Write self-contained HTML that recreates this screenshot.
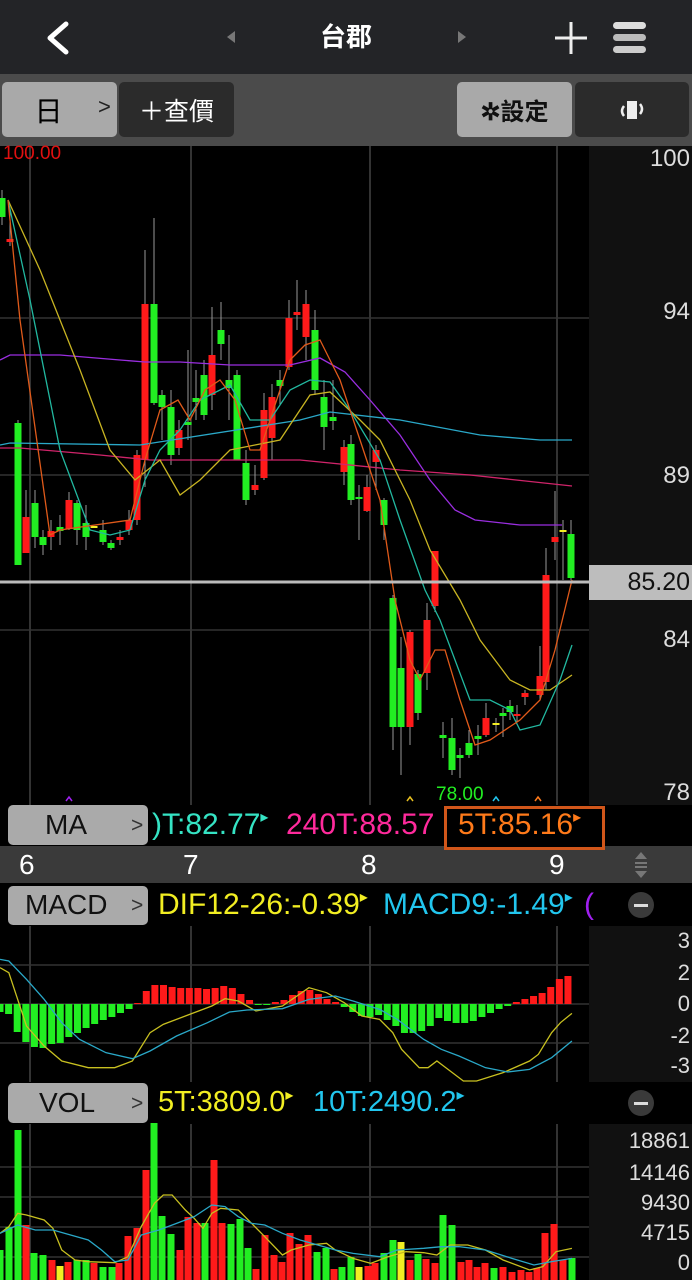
<!DOCTYPE html>
<html><head><meta charset="utf-8">
<style>
*{margin:0;padding:0;box-sizing:border-box}
body{width:692px;height:1280px;background:#000;overflow:hidden;position:relative;font-family:"Liberation Sans","Noto Sans CJK TC",sans-serif}
.abs{position:absolute}
.btn{position:absolute;border-radius:5px;display:flex;align-items:center;justify-content:center}
.lbl{position:absolute;white-space:nowrap;font-size:25px;line-height:1}
.v{font-size:30px;top:0}
</style></head><body>
<!-- top bar -->
<div class="abs" style="left:0;top:0;width:692px;height:74px;background:#232427"></div>
<svg class="abs" style="left:0;top:0" width="692" height="74">
<path d="M66 24 L50 38 L66 52" stroke="#fff" stroke-width="5" fill="none" stroke-linecap="round" stroke-linejoin="round"/>
<path d="M235 31 L227 37 L235 43Z" fill="#777"/>
<path d="M458 31 L466 37 L458 43Z" fill="#777"/>
<path d="M571 22 V54 M555 38 H587" stroke="#eee" stroke-width="3"/>
<rect x="613" y="22" width="33" height="7" rx="3.5" fill="#ddd"/>
<rect x="613" y="34" width="33" height="7" rx="3.5" fill="#bbb"/>
<rect x="613" y="46" width="33" height="7" rx="3.5" fill="#ccc"/>
</svg>
<div class="lbl" style="left:0;width:692px;text-align:center;top:24px;color:#fff;font-size:26px;font-weight:bold">台郡</div>
<!-- toolbar -->
<div class="abs" style="left:0;top:74px;width:692px;height:72px;background:#4b4b4b"></div>
<div class="btn" style="left:2px;top:82px;width:115px;height:55px;background:#a9a9a9"><span style="font-size:28px;color:#000;margin-right:22px">日</span></div>
<div class="lbl" style="left:98px;top:96px;color:#222;font-size:22px">&gt;</div>
<div class="btn" style="left:119px;top:82px;width:115px;height:55px;background:#2b2b2b;color:#fff;font-size:25px">＋查價</div>
<div class="btn" style="left:457px;top:82px;width:115px;height:55px;background:#a9a9a9;color:#111;font-size:24px;font-weight:bold">✲設定</div>
<div class="btn" style="left:575px;top:82px;width:114px;height:55px;background:#2b2b2b">
<svg width="30" height="24"><rect x="10" y="3" width="10" height="18" fill="#eee"/><path d="M7 8 Q3 13 7 18 M23 6 Q27 11 23 16" stroke="#eee" stroke-width="2.5" fill="none"/></svg></div>
<!-- right axis backgrounds -->
<div class="abs" style="left:589px;top:146px;width:103px;height:659px;background:#111"></div>
<div class="abs" style="left:589px;top:926px;width:103px;height:156px;background:#111"></div>
<div class="abs" style="left:589px;top:1124px;width:103px;height:156px;background:#111"></div>
<!-- date row -->
<div class="abs" style="left:0;top:846px;width:692px;height:37px;background:#3a3a3a"></div>
<svg id="chart" class="abs" style="left:0;top:0" width="692" height="1280"></svg>
<!-- price axis -->
<div class="lbl" style="right:2px;top:147px;color:#ddd;font-size:24px">100</div>
<div class="lbl" style="right:2px;top:300px;color:#ddd;font-size:24px">94</div>
<div class="lbl" style="right:2px;top:464px;color:#ddd;font-size:24px">89</div>
<div class="lbl" style="right:2px;top:628px;color:#ddd;font-size:24px">84</div>
<div class="lbl" style="right:2px;top:781px;color:#ddd;font-size:24px">78</div>
<div class="abs" style="left:589px;top:565px;width:103px;height:35px;background:#bdbdbd"></div>
<div class="lbl" style="right:2px;top:570px;color:#111;font-size:25px">85.20</div>
<div class="lbl" style="left:3px;top:144px;color:#e01010;font-size:19px">100.00</div>
<div class="lbl" style="left:436px;top:785px;color:#22ee22;font-size:19px">78.00</div>
<!-- MA row -->
<div class="btn" style="left:8px;top:805px;width:140px;height:40px;background:#aaa"></div>
<div class="lbl" style="left:45px;top:811px;color:#111;font-size:28px">MA</div>
<div class="lbl" style="left:131px;top:815px;color:#333;font-size:21px">&gt;</div>
<div class="lbl" style="left:152px;top:810px;color:#35e3c4;font-size:30px">)T:82.77<span style="font-size:16px;vertical-align:top">▸</span></div>
<div class="lbl" style="left:286px;top:810px;color:#ff2a9c;font-size:30px">240T:88.57</div>
<div class="abs" style="left:444px;top:806px;width:161px;height:44px;border:3px solid #d0561a;background:#000"></div>
<div class="lbl" style="left:458px;top:810px;color:#ff7a1a;font-size:30px">5T:85.16<span style="font-size:16px;vertical-align:top">▸</span></div>
<!-- dates -->
<div class="lbl" style="left:19px;top:851px;color:#fff;font-size:28px">6</div>
<div class="lbl" style="left:183px;top:851px;color:#fff;font-size:28px">7</div>
<div class="lbl" style="left:361px;top:851px;color:#fff;font-size:28px">8</div>
<div class="lbl" style="left:549px;top:851px;color:#fff;font-size:28px">9</div>
<svg class="abs" style="left:630px;top:850px" width="22" height="30"><path d="M5 9 L11 2 L17 9Z M5 21 L11 28 L17 21Z" fill="#777"/><rect x="5" y="12" width="12" height="2" fill="#777"/><rect x="5" y="16" width="12" height="2" fill="#777"/></svg>
<!-- MACD row -->
<div class="btn" style="left:8px;top:886px;width:140px;height:39px;background:#aaa"></div>
<div class="lbl" style="left:25px;top:891px;color:#111;font-size:28px">MACD</div>
<div class="lbl" style="left:131px;top:895px;color:#333;font-size:21px">&gt;</div>
<div class="lbl" style="left:158px;top:890px;color:#f2ee22;font-size:30px">DIF12-26:-0.39<span style="font-size:16px;vertical-align:top">▸</span></div>
<div class="lbl" style="left:383px;top:890px;color:#22c6ee;font-size:30px">MACD9:-1.49<span style="font-size:16px;vertical-align:top">▸</span></div>
<div class="lbl" style="left:584px;top:890px;color:#a020f0;font-size:30px">(</div>
<div class="abs" style="left:628px;top:892px;width:26px;height:26px;border-radius:13px;background:#3a3a3a"></div>
<div class="abs" style="left:634px;top:904px;width:14px;height:3px;background:#ddd"></div>
<!-- MACD axis -->
<div class="lbl" style="right:2px;top:930px;color:#ddd;font-size:22px">3</div>
<div class="lbl" style="right:2px;top:962px;color:#ddd;font-size:22px">2</div>
<div class="lbl" style="right:2px;top:993px;color:#ddd;font-size:22px">0</div>
<div class="lbl" style="right:2px;top:1025px;color:#ddd;font-size:22px">-2</div>
<div class="lbl" style="right:2px;top:1055px;color:#ddd;font-size:22px">-3</div>
<!-- VOL row -->
<div class="btn" style="left:8px;top:1083px;width:140px;height:40px;background:#aaa"></div>
<div class="lbl" style="left:39px;top:1089px;color:#111;font-size:28px">VOL</div>
<div class="lbl" style="left:131px;top:1093px;color:#333;font-size:21px">&gt;</div>
<div class="lbl" style="left:158px;top:1088px;color:#f2ee22;font-size:29px">5T:3809.0<span style="font-size:16px;vertical-align:top">▸</span></div>
<div class="lbl" style="left:313px;top:1088px;color:#22c6ee;font-size:29px">10T:2490.2<span style="font-size:16px;vertical-align:top">▸</span></div>
<div class="abs" style="left:628px;top:1090px;width:26px;height:26px;border-radius:13px;background:#3a3a3a"></div>
<div class="abs" style="left:634px;top:1102px;width:14px;height:3px;background:#ddd"></div>
<div class="lbl" style="right:2px;top:1130px;color:#ddd;font-size:22px">18861</div>
<div class="lbl" style="right:2px;top:1162px;color:#ddd;font-size:22px">14146</div>
<div class="lbl" style="right:2px;top:1192px;color:#ddd;font-size:22px">9430</div>
<div class="lbl" style="right:2px;top:1222px;color:#ddd;font-size:22px">4715</div>
<div class="lbl" style="right:2px;top:1252px;color:#ddd;font-size:22px">0</div>
<script>
var s='';
var G='#22ee22',R='#ff1a1a',Y='#f2ee22';
[30,191,370,557].forEach(function(x){
 s+='<line x1="'+x+'" y1="146" x2="'+x+'" y2="805" stroke="#444" stroke-width="1.5"/>';
 s+='<line x1="'+x+'" y1="926" x2="'+x+'" y2="1082" stroke="#444" stroke-width="1.5"/>';
 s+='<line x1="'+x+'" y1="1124" x2="'+x+'" y2="1280" stroke="#444" stroke-width="1.5"/>';
});
[318,475,630].forEach(function(y){s+='<line x1="0" y1="'+y+'" x2="589" y2="'+y+'" stroke="#333" stroke-width="1.5"/>';});
[965,1004,1043].forEach(function(y){s+='<line x1="0" y1="'+y+'" x2="589" y2="'+y+'" stroke="#333" stroke-width="1.5"/>';});
[1167,1197,1227,1257].forEach(function(y){s+='<line x1="0" y1="'+y+'" x2="589" y2="'+y+'" stroke="#333" stroke-width="1.5"/>';});
var c=[[2,198,217,190,225,G],[10,239,242,210,246,R],[18,423,565,420,565,G],[26,517,553,490,548,R],[35,503,537,490,548,G],[43,537,545,530,555,G],[51,531,537,520,550,R],[60,527,531,515,545,G],[69,500,529,492,530,R],[77,503,530,500,545,G],[86,523,537,505,550,G],[94,526,528,526,528,Y],[103,530,542,520,545,G],[111,543,548,540,550,G],[120,537,540,530,545,R],[129,520,530,510,535,R],[137,455,520,450,525,R],[145,304,460,250,487,R],[154,304,403,218,405,G],[162,395,407,390,440,G],[171,407,455,390,465,G],[179,430,448,420,455,R],[188,422,425,350,440,G],[196,398,402,370,420,G],[204,375,415,360,420,G],[212,355,395,307,410,R],[221,330,344,302,360,G],[229,380,388,335,420,G],[237,375,460,370,460,G],[246,463,500,450,505,G],[255,485,490,465,495,R],[264,410,478,393,480,R],[272,397,438,384,460,R],[280,380,386,370,405,G],[289,318,367,300,370,R],[297,312,315,280,330,R],[306,304,337,290,360,R],[315,330,390,310,395,G],[324,397,427,380,450,G],[333,417,421,380,430,G],[344,447,472,440,485,R],[351,444,500,435,505,G],[359,497,499,485,540,G],[367,487,511,475,512,R],[376,450,462,445,490,R],[384,500,525,498,540,G],[393,598,727,595,750,G],[401,668,727,637,775,G],[410,632,727,630,745,R],[418,674,713,670,720,G],[427,620,673,603,690,R],[435,551,606,551,612,R],[443,735,738,722,758,G],[452,738,770,718,775,G],[460,755,758,748,778,G],[469,743,755,730,758,G],[478,736,739,725,755,G],[486,718,735,703,737,R],[496,723,725,718,732,Y],[503,713,716,708,737,G],[510,706,712,700,720,G],[517,714,716,705,722,R],[525,693,697,690,705,R],[540,676,695,646,700,R],[546,575,682,548,690,R],[555,537,542,491,560,R],[563,530,532,520,580,Y],[571,534,578,520,580,G]];
c.forEach(function(d){
 s+='<line x1="'+d[0]+'" y1="'+d[3]+'" x2="'+d[0]+'" y2="'+d[4]+'" stroke="#999" stroke-width="1"/>';
 var h=Math.max(d[2]-d[1],2);
 s+='<rect x="'+(d[0]-3.5)+'" y="'+d[1]+'" width="7" height="'+h+'" fill="'+d[5]+'"/>';
});
function pl(pts,col,w){s+='<polyline points="'+pts.map(function(p){return p[0]+','+p[1]}).join(' ')+'" fill="none" stroke="'+col+'" stroke-width="'+(w||1.3)+'"/>';}
pl([[0,360],[10,355],[60,355],[120,360],[145,362],[180,362],[230,365],[290,365],[320,358],[345,372],[370,400],[400,435],[430,480],[455,510],[475,520],[520,525],[562,525]],'#9a2ee0');
pl([[0,445],[10,443],[140,445],[300,420],[330,412],[400,420],[480,435],[540,440],[572,440]],'#2aa8c8');
pl([[0,448],[20,448],[100,455],[150,460],[300,460],[400,470],[470,475],[572,486]],'#d0246a');
pl([[8,200],[40,270],[80,370],[110,450],[135,480],[160,460],[180,495],[200,480],[230,450],[255,445],[280,440],[310,395],[330,392],[360,420],[380,440],[410,500],[430,550],[460,600],[480,640],[510,680],[530,690],[550,690],[572,675]],'#c8b422');
pl([[8,200],[30,300],[60,450],[90,530],[110,535],[130,530],[145,480],[160,450],[180,430],[200,400],[230,385],[250,420],[270,420],[290,390],[310,380],[330,382],[350,410],[380,460],[400,520],[425,590],[440,620],[470,700],[490,700],[510,710],[520,730],[540,725],[560,680],[572,645]],'#22b8a0');
pl([[8,200],[20,320],[50,535],[60,530],[130,520],[145,460],[160,410],[178,400],[190,420],[205,390],[220,380],[235,400],[250,450],[260,450],[270,420],[290,360],[305,345],[320,340],[340,380],[360,440],[380,500],[395,600],[410,660],[420,680],[435,650],[445,650],[460,700],[475,745],[490,740],[520,720],[540,700],[555,650],[572,580]],'#e05a1a');
s+='<line x1="0" y1="582" x2="589" y2="582" stroke="#bbb" stroke-width="3"/>';
[[69,'#a020f0'],[410,'#e8c020'],[496,'#22c6ee'],[538,'#ff7a1a']].forEach(function(m){s+='<path d="M'+(m[0]-3)+' 801 L'+m[0]+' 797 L'+(m[0]+3)+' 801" stroke="'+m[1]+'" fill="none" stroke-width="1.5"/>';});
var mh=[-8,-10,-28,-38,-43,-44,-40,-39,-33,-29,-24,-20,-16,-13,-9,-5,1,13,19,19,17,16,16,16,15,16,18,16,10,4,-1,-1,2,4,9,13,14,10,5,2,-3,-8,-12,-13,-11,-16,-22,-29,-29,-27,-22,-14,-17,-19,-19,-17,-13,-9,-5,-2,2,5,8,11,17,25,28];
mh.forEach(function(v,i){var x=i*19.5/2.266;var col=v>=0?R:G;var y=v>=0?1004-v:1004;s+='<rect x="'+(x-3.5)+'" y="'+y+'" width="7" height="'+Math.max(Math.abs(v),1)+'" fill="'+col+'"/>';});
function zp(pts,oy,col){pl(pts.map(function(p){return [p[0]/2.266,oy+p[1]/3]}),col,1.3);}
zp([[0,125],[20,140],[40,220],[60,300],[100,360],[140,405],[200,425],[260,425],[300,405],[340,320],[370,295],[420,270],[480,240],[510,218],[540,225],[580,255],[640,240],[700,185],[740,200],[780,230],[820,270],[860,280],[890,320],[910,370],[950,425],[970,425],[990,405],[1010,425],[1050,465],[1080,465],[1140,440],[1200,405],[1220,385],[1250,320],[1270,290],[1296,262]],926,'#c8c020');
zp([[0,100],[20,105],[60,160],[100,220],[140,290],[180,340],[240,380],[300,398],[340,375],[400,330],[470,290],[520,258],[560,252],[640,248],[700,220],[760,210],[800,225],[860,250],[900,280],[960,340],[1000,370],[1040,390],[1100,425],[1150,438],[1200,430],[1250,395],[1296,345]],926,'#2aa8c8');
var vb=[[0,1250,G],[9,1227,G],[18,1130,G],[26,1225,R],[34,1253,G],[43,1255,G],[52,1260,R],[60,1266,Y],[68,1262,R],[77,1260,G],[86,1260,G],[94,1263,R],[103,1267,G],[112,1267,G],[119,1263,R],[128,1236,R],[137,1228,R],[146,1170,R],[154,1123,G],[162,1216,G],[171,1234,G],[180,1250,R],[188,1217,R],[197,1223,R],[205,1223,G],[214,1160,R],[222,1223,R],[231,1224,G],[240,1219,G],[248,1248,G],[256,1269,R],[265,1235,R],[274,1255,R],[282,1262,R],[290,1233,R],[299,1244,R],[308,1235,R],[317,1252,G],[326,1248,G],[334,1269,R],[342,1267,G],[351,1257,G],[359,1267,Y],[368,1266,R],[375,1263,R],[384,1253,G],[393,1240,G],[401,1242,Y],[410,1260,R],[418,1254,G],[426,1259,R],[435,1263,R],[443,1215,G],[452,1225,G],[461,1262,R],[469,1260,R],[477,1267,R],[485,1263,R],[494,1268,G],[503,1267,R],[512,1272,R],[521,1270,R],[529,1272,R],[537,1268,R],[545,1233,R],[554,1224,R],[563,1260,R],[572,1258,G]];
vb.forEach(function(d){s+='<rect x="'+(d[0]-3.5)+'" y="'+d[1]+'" width="7" height="'+(1280-d[1])+'" fill="'+d[2]+'"/>';});
zp([[0,460],[20,440],[40,400],[60,405],[100,420],[120,445],[140,510],[170,540],[200,545],[260,548],[290,530],[320,440],[350,370],[370,345],[390,345],[420,390],[440,415],[460,445],[480,400],[500,385],[540,390],[570,430],[600,470],[640,525],[660,510],[700,495],[740,490],[760,510],[800,535],[840,550],[880,530],[920,515],[960,518],[990,525],[1020,495],[1060,495],[1100,510],[1140,540],[1200,570],[1230,560],[1260,515],[1296,505]],1080,'#c8c020');
zp([[0,460],[40,435],[80,450],[120,450],[160,465],[200,480],[230,510],[260,545],[290,540],[320,465],[360,450],[400,430],[440,410],[480,375],[510,380],[540,410],[570,430],[600,435],[640,460],[680,480],[720,495],[760,510],[800,520],[860,530],[900,510],[960,505],[1000,500],[1040,500],[1100,510],[1160,535],[1210,555],[1250,545],[1296,535]],1080,'#2aa8c8');
document.getElementById('chart').innerHTML=s;
</script>
</body></html>
